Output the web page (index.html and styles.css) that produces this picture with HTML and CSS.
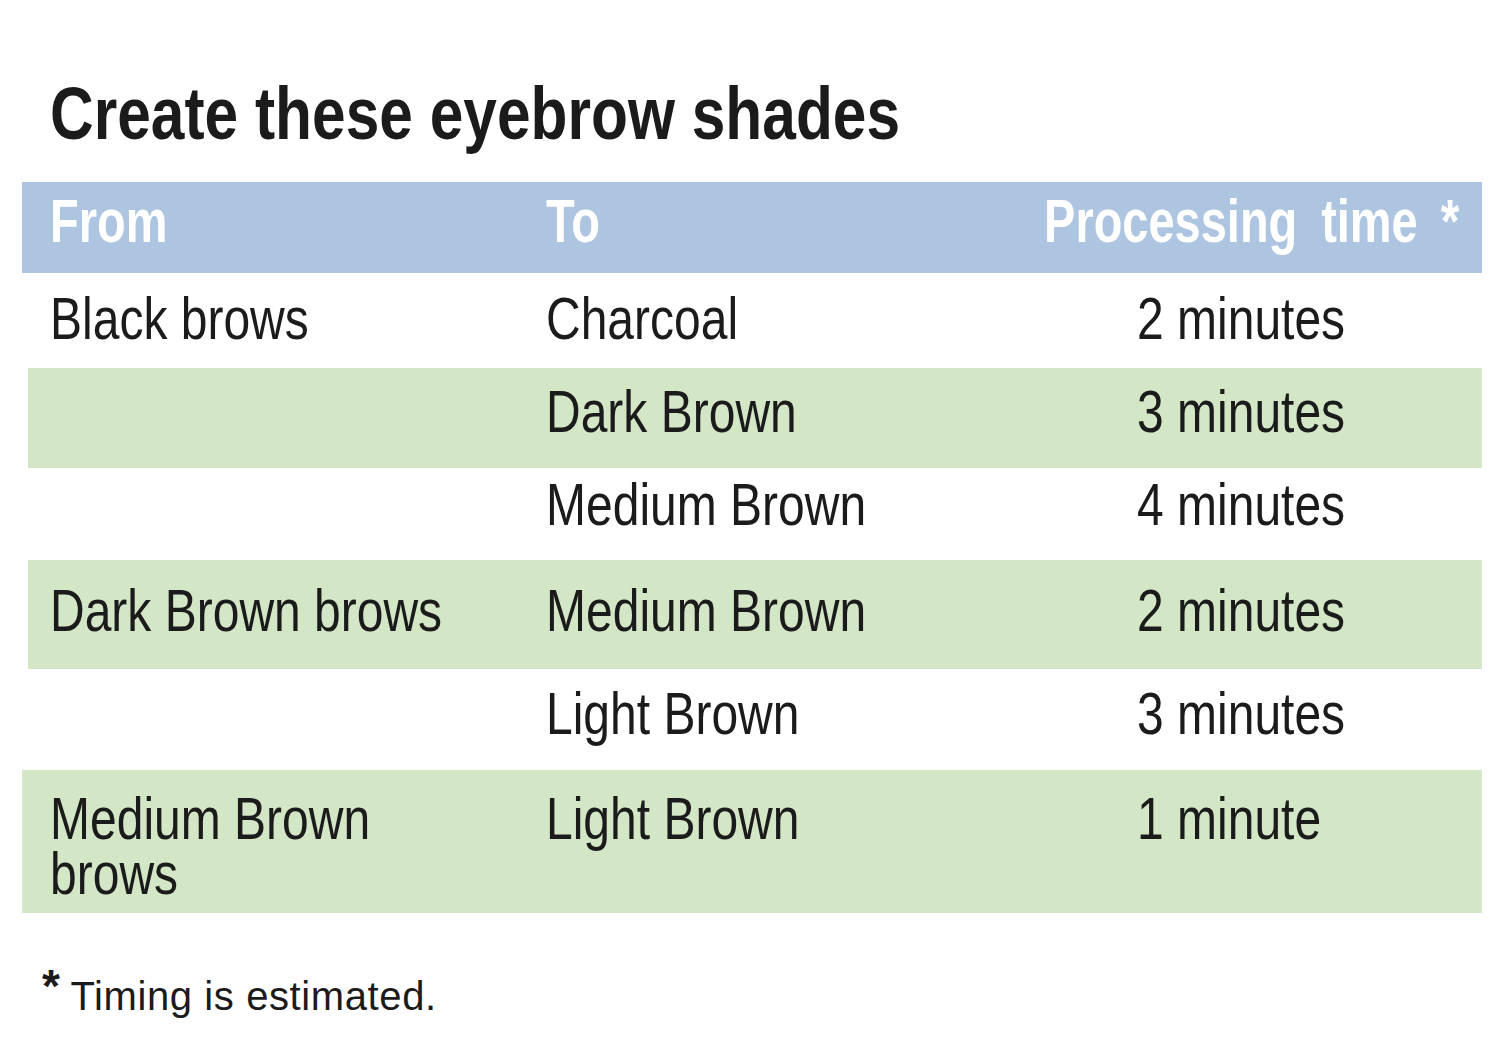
FILE: index.html
```html
<!DOCTYPE html>
<html lang="en">
<head>
<meta charset="utf-8">
<title>Create these eyebrow shades</title>
<link rel="stylesheet" href="styles.css">
</head>
<body>
<div class="sheet">
  <h1 class="title"><span class="title-text">Create these eyebrow shades</span></h1>
  <div class="shades">
    <div class="row head">
      <div class="cell"><span class="ht">From</span></div>
      <div class="cell"><span class="ht">To</span></div>
      <div class="cell cell-right"><span class="ht ht-right">Processing<span class="sp"></span>time<span class="ast">*</span></span></div>
    </div>
    <div class="row r1">
      <div class="cell"><span class="t">Black brows</span></div>
      <div class="cell"><span class="t">Charcoal</span></div>
      <div class="cell"><span class="t">2 minutes</span></div>
    </div>
    <div class="row r2 green inset">
      <div class="cell"></div>
      <div class="cell"><span class="t">Dark Brown</span></div>
      <div class="cell"><span class="t">3 minutes</span></div>
    </div>
    <div class="row r3">
      <div class="cell"></div>
      <div class="cell"><span class="t">Medium Brown</span></div>
      <div class="cell"><span class="t">4 minutes</span></div>
    </div>
    <div class="row r4 green inset">
      <div class="cell"><span class="t">Dark Brown brows</span></div>
      <div class="cell"><span class="t">Medium Brown</span></div>
      <div class="cell"><span class="t">2 minutes</span></div>
    </div>
    <div class="row r5">
      <div class="cell"></div>
      <div class="cell"><span class="t">Light Brown</span></div>
      <div class="cell"><span class="t">3 minutes</span></div>
    </div>
    <div class="row r6 green">
      <div class="cell"><span class="t">Medium Brown<br>brows</span></div>
      <div class="cell"><span class="t">Light Brown</span></div>
      <div class="cell"><span class="t">1 minute</span></div>
    </div>
  </div>
  <p class="note"><span class="note-star">*</span>Timing is estimated.</p>
</div>
</body>
</html>
```

FILE: styles.css
```css
html, body {
  margin: 0;
  padding: 0;
  background: #ffffff;
}

body {
  font-family: "Liberation Sans", Arial, sans-serif;
  color: #1b1b1b;
  width: 1500px;
  height: 1044px;
  overflow: hidden;
}

.sheet {
  padding: 76px 0 0 22px;
  width: 1460px;
}

.title {
  margin: 0 0 31px 28px;
  font-size: 75px;
  line-height: 75px;
  height: 75px;
  font-weight: 700;
  white-space: nowrap;
}

.title-text {
  display: inline-block;
  transform: scaleX(0.806);
  transform-origin: left center;
}

.shades {
  display: flex;
  flex-direction: column;
}

.row {
  display: grid;
  grid-template-columns: 496px 591px minmax(0, 1fr);
  box-sizing: border-box;
}

.row.inset {
  margin-left: 6px;
  grid-template-columns: 490px 591px minmax(0, 1fr);
}

.row.inset .cell:first-child {
  padding-left: 22px;
}

.green {
  background: #d3e6c6;
}

.cell {
  padding-left: 28px;
  display: flex;
  align-items: flex-start;
  min-width: 0;
}

.head {
  background: #aec5e1;
  height: 91px;
  color: #ffffff;
  padding-top: 9px;
}

.ht {
  display: inline-block;
  flex: none;
  font-size: 61px;
  line-height: 61px;
  font-weight: 700;
  white-space: nowrap;
  transform: scaleX(0.77);
  transform-origin: left center;
}

.cell-right {
  justify-content: flex-end;
  padding-right: 23px;
}

.ht-right {
  transform-origin: right center;
}

.sp {
  display: inline-block;
  width: 31px;
}

.ast {
  font-size: 62px;
  line-height: 40px;
  margin-left: 30px;
  vertical-align: 0px;
}

.t {
  display: inline-block;
  font-size: 60px;
  line-height: 55px;
  white-space: nowrap;
  transform: scaleX(0.8);
  transform-origin: left center;
}

.r1 { height: 95px; padding-top: 18px; }
.r2 { height: 100px; padding-top: 16px; }
.r3 { height: 92px; padding-top: 9px; }
.r4 { height: 109px; padding-top: 23px; }
.r5 { height: 101px; padding-top: 17px; }
.r6 { height: 143px; padding-top: 21px; }

.note {
  margin: 53px 0 0 20px;
  font-size: 40px;
  line-height: 40px;
  letter-spacing: 0.6px;
  white-space: nowrap;
}

.note-star {
  display: inline-block;
  font-size: 46px;
  line-height: 40px;
  font-weight: 700;
  margin-right: 10px;
  vertical-align: 8px;
}
```
